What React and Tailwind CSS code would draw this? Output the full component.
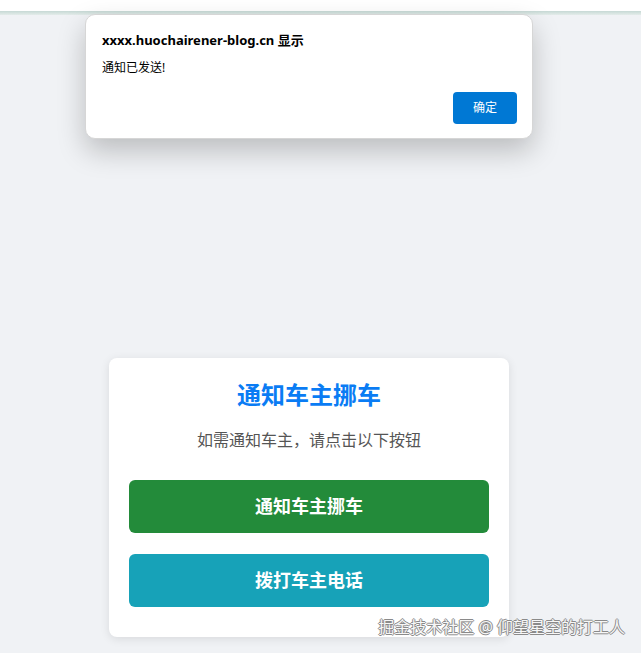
const cjk = { fontFamily: '"Noto Sans", "Noto Sans CJK SC", sans-serif' };

const AlertDialog = () => (
  <div
    className="absolute left-[85px] top-[14px] w-[448px] h-[125px] bg-white rounded-[10px] border border-[#d6d6d6] shadow-[0_12px_28px_rgba(0,0,0,0.22)]"
    style={cjk}
  >
    <div className="pl-[16px] pt-[16px] text-[13px] font-bold text-black leading-[18px]">
      xxxx.huochairener-blog.cn 显示
    </div>
    <div className="pl-[16px] pt-[10px] text-[12px] text-black leading-[18px]">通知已发送!</div>
    <div className="flex justify-end pr-[15px] pt-[15px]">
      <button className="w-[64px] h-[32px] rounded-[4px] bg-[#0078d4] text-white text-[12px]">
        确定
      </button>
    </div>
  </div>
);

const App = () => {
  return (
    <div className="relative min-h-[653px] bg-[#f0f2f5] overflow-hidden" style={cjk}>
      <div className="h-[11px] bg-white" />
      <div className="h-[4px] bg-gradient-to-b from-[#c6d9d5] to-[#e4ecea]" />

      <div className="pt-[343px] pl-[109px]">
        <div className="w-[400px] h-[279px] bg-white rounded-[8px] shadow-[0_2px_10px_rgba(0,0,0,0.1)] px-[20px] pt-[19px]">
          <h1 className="text-center text-[24px] font-bold text-[#0a7cf4] leading-[36px]">通知车主挪车</h1>
          <p className="mt-[15px] text-center text-[16px] text-[#555] leading-[24px]">
            如需通知车主，请点击以下按钮
          </p>
          <button className="mt-[28px] w-full h-[53px] rounded-[6px] bg-[#238b3a] text-white text-[18px] font-bold">
            通知车主挪车
          </button>
          <button className="mt-[21px] w-full h-[53px] rounded-[6px] bg-[#17a2b8] text-white text-[18px] font-bold">
            拨打车主电话
          </button>
        </div>
      </div>

      <div className="absolute right-[16px] top-[615px] text-[16px] leading-[24px] text-[#f7f7f7] [text-shadow:1px_0_0_#8a8a8a,-1px_0_0_#8a8a8a,0_1px_0_#8a8a8a,0_-1px_0_#8a8a8a]">
        掘金技术社区 @ 仰望星空的打工人
      </div>

      <AlertDialog />
    </div>
  );
};

export default App;
